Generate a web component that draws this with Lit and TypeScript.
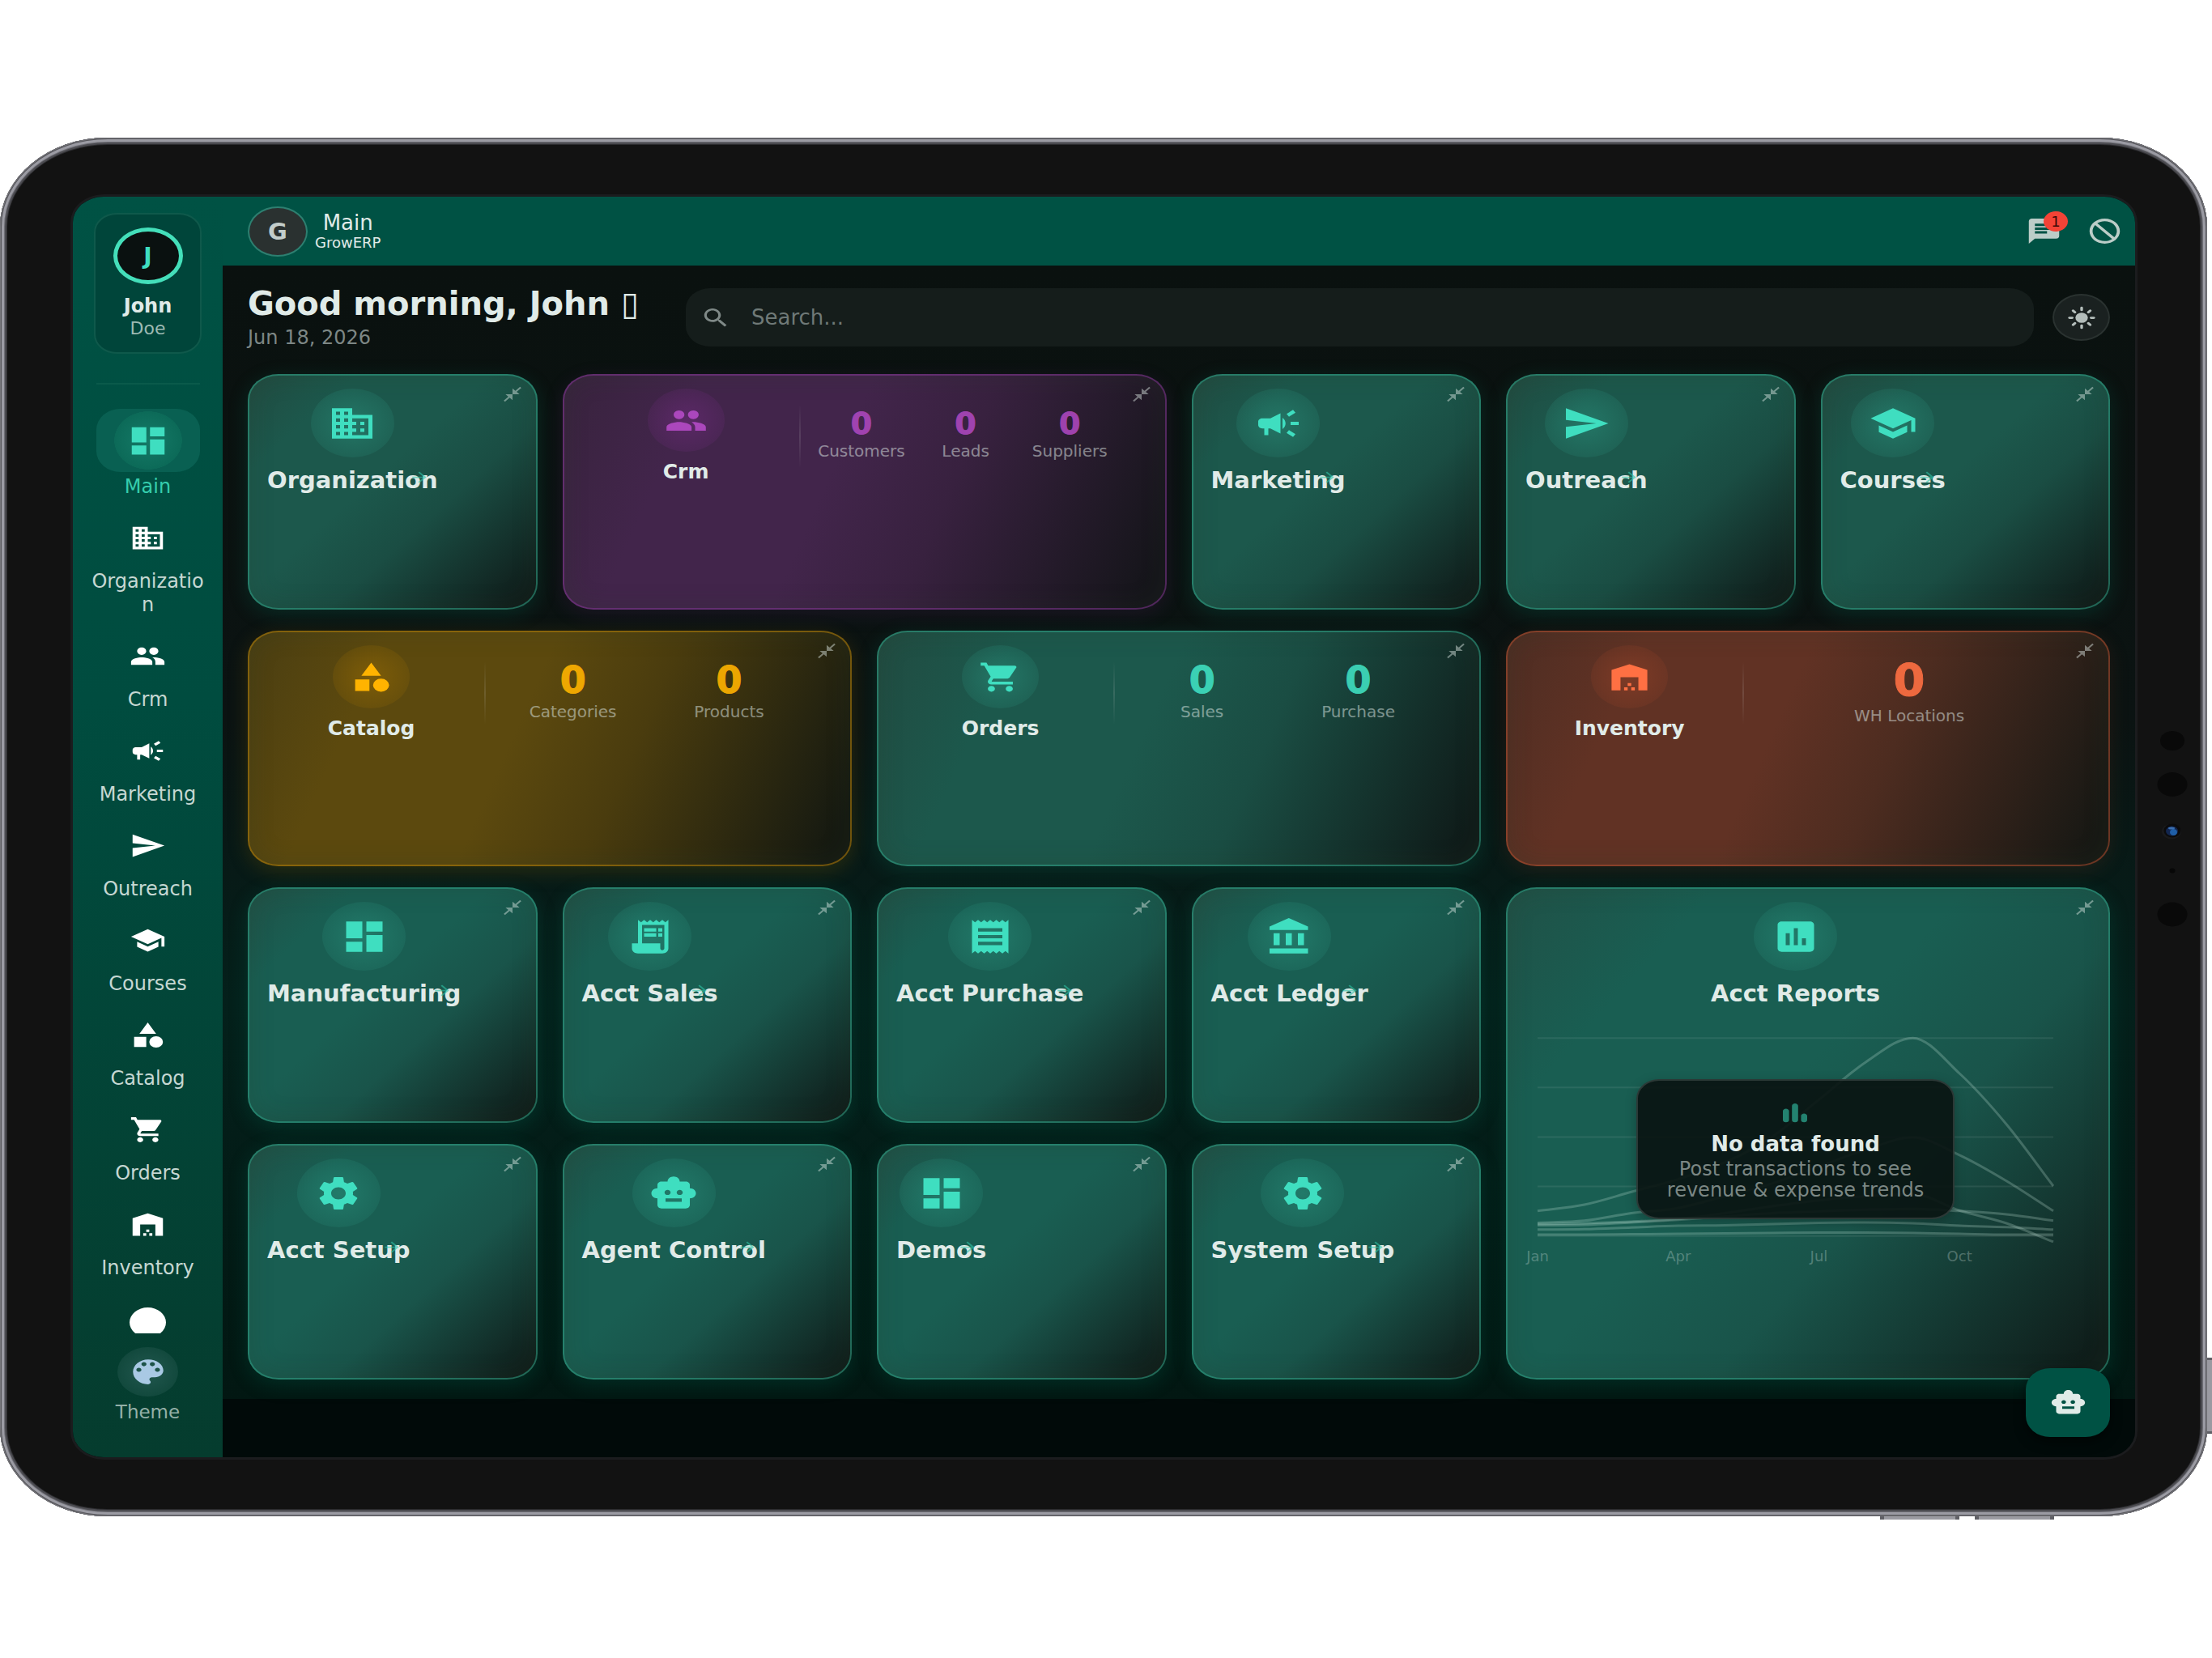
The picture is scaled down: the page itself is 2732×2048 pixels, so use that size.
import { LitElement, html, svg, css, nothing } from "lit";
import { customElement, property } from "lit/decorators.js";
import { classMap } from "lit/directives/class-map.js";

const ICONS: Record<string, string> = {
  dashboard: "M3 13h8V3H3v10zm0 8h8v-6H3v6zm10 0h8V11h-8v10zm0-18v6h8V3h-8z",
  business:
    "M12 7V3H2v18h20V7H12zM6 19H4v-2h2v2zm0-4H4v-2h2v2zm0-4H4V9h2v2zm0-4H4V5h2v2zm4 12H8v-2h2v2zm0-4H8v-2h2v2zm0-4H8V9h2v2zm0-4H8V5h2v2zm10 12h-8v-2h2v-2h-2v-2h2v-2h-2V9h8v10zm-2-8h-2v2h2v-2zm0 4h-2v2h2v-2z",
  people:
    "M16 11c1.66 0 2.99-1.34 2.99-3S17.66 5 16 5c-1.66 0-3 1.34-3 3s1.34 3 3 3zm-8 0c1.66 0 2.99-1.34 2.99-3S9.66 5 8 5C6.34 5 5 6.34 5 8s1.34 3 3 3zm0 2c-2.33 0-7 1.17-7 3.5V19h14v-2.5c0-2.33-4.67-3.5-7-3.5zm8 0c-.29 0-.62.02-.97.05 1.16.84 1.97 1.97 1.97 3.45V19h6v-2.5c0-2.33-4.67-3.5-7-3.5z",
  campaign:
    "M18 11v2h4v-2h-4zm-2 6.61c.96.71 2.21 1.65 3.2 2.39.4-.53.8-1.07 1.2-1.6-.99-.74-2.24-1.68-3.2-2.4-.4.54-.8 1.08-1.2 1.61zM20.4 5.6c-.4-.53-.8-1.07-1.2-1.6-.99.74-2.24 1.68-3.2 2.4.4.53.8 1.07 1.2 1.6.96-.72 2.21-1.65 3.2-2.4zM4 9c-1.1 0-2 .9-2 2v2c0 1.1.9 2 2 2h1v4h2v-4h1l5 3V6L8 9H4zm11.5 3c0-1.33-.58-2.53-1.5-3.35v6.69c.92-.81 1.5-2.01 1.5-3.34z",
  send: "M2.01 21 23 12 2.01 3 2 10l15 2-15 2z",
  school: "M5 13.18v4L12 21l7-3.82v-4L12 17l-7-3.82zM12 3 1 9l11 6 9-4.91V17h2V9L12 3z",
  category:
    "M12 2l-5.5 9h11zM3 13.5h8v8H3zM17.5 13a4.5 4.5 0 1 0 0 9 4.5 4.5 0 0 0 0-9z",
  cart:
    "M7 18c-1.1 0-1.99.9-1.99 2S5.9 22 7 22s2-.9 2-2-.9-2-2-2zM1 2v2h2l3.6 7.59-1.35 2.45c-.16.28-.25.61-.25.96 0 1.1.9 2 2 2h12v-2H7.42c-.14 0-.25-.11-.25-.25l.03-.12.9-1.63h7.45c.75 0 1.41-.41 1.75-1.03l3.58-6.49c.08-.14.12-.31.12-.48 0-.55-.45-1-1-1H5.21l-.94-2H1zm16 16c-1.1 0-1.99.9-1.99 2s.89 2 1.99 2 2-.9 2-2-.9-2-2-2z",
  warehouse:
    "M22 21V7L12 3 2 7v14h5v-9h10v9h5zm-11-2H9v2h2v-2zm2-3h-2v2h2v-2zm2 3h-2v2h2v-2z",
  receiptLong:
    "M19.5 3.5 18 2l-1.5 1.5L15 2l-1.5 1.5L12 2l-1.5 1.5L9 2 7.5 3.5 6 2v14H3v3c0 1.66 1.34 3 3 3h12c1.66 0 3-1.34 3-3V2l-1.5 1.5zM19 19c0 .55-.45 1-1 1s-1-.45-1-1v-3H8V5h11v14zM9 7h6v2H9zM16 7h2v2h-2zM9 10h6v2H9zM16 10h2v2h-2z",
  receipt:
    "M18 17H6v-2h12v2zm0-4H6v-2h12v2zm0-4H6V7h12v2zM3 22l1.5-1.5L6 22l1.5-1.5L9 22l1.5-1.5L12 22l1.5-1.5L15 22l1.5-1.5L18 22l1.5-1.5L21 22V2l-1.5 1.5L18 2l-1.5 1.5L15 2l-1.5 1.5L12 2l-1.5 1.5L9 2 7.5 3.5 6 2 4.5 3.5 3 2v20z",
  bank:
    "M4 10v7h3v-7H4zm6 0v7h3v-7h-3zM2 22h19v-3H2v3zm14-12v7h3v-7h-3zm-4.5-9L2 6v2h19V6l-9.5-5z",
  assessment:
    "M19 3H5c-1.1 0-2 .9-2 2v14c0 1.1.9 2 2 2h14c1.1 0 2-.9 2-2V5c0-1.1-.9-2-2-2zM9 17H7v-7h2v7zm4 0h-2V7h2v10zm4 0h-2v-4h2v4z",
  settings:
    "M19.14 12.94c.04-.3.06-.61.06-.94 0-.32-.02-.64-.07-.94l2.03-1.58c.18-.14.23-.41.12-.61l-1.92-3.32c-.12-.22-.37-.29-.59-.22l-2.39.96c-.5-.38-1.03-.7-1.62-.94l-.36-2.54c-.04-.24-.24-.41-.48-.41h-3.84c-.24 0-.43.17-.47.41l-.36 2.54c-.59.24-1.13.57-1.62.94l-2.39-.96c-.22-.08-.47 0-.59.22L2.74 8.87c-.12.21-.08.47.12.61l2.03 1.58c-.05.3-.09.63-.09.94s.02.64.07.94l-2.03 1.58c-.18.14-.23.41-.12.61l1.92 3.32c.12.22.37.29.59.22l2.39-.96c.5.38 1.03.7 1.62.94l.36 2.54c.05.24.24.41.48.41h3.84c.24 0 .44-.17.47-.41l.36-2.54c.59-.24 1.13-.56 1.62-.94l2.39.96c.22.08.47 0 .59-.22l1.92-3.32c.12-.22.07-.47-.12-.61l-2.01-1.58zM12 15.6c-1.98 0-3.6-1.62-3.6-3.6s1.62-3.6 3.6-3.6 3.6 1.62 3.6 3.6-1.62 3.6-3.6 3.6z",
  robot:
    "M20 9V7c0-1.1-.9-2-2-2h-3c0-1.66-1.34-3-3-3S9 3.34 9 5H6c-1.1 0-2 .9-2 2v2c-1.66 0-3 1.34-3 3s1.34 3 3 3v4c0 1.1.9 2 2 2h12c1.1 0 2-.9 2-2v-4c1.66 0 3-1.34 3-3s-1.34-3-3-3zM7.5 11.5c0-.83.67-1.5 1.5-1.5s1.5.67 1.5 1.5S9.83 13 9 13s-1.5-.67-1.5-1.5zM16 17H8v-2h8v2zm-1-4c-.83 0-1.5-.67-1.5-1.5S14.17 10 15 10s1.5.67 1.5 1.5S15.83 13 15 13z",
  palette:
    "M12 3c-4.97 0-9 4.03-9 9s4.03 9 9 9c.83 0 1.5-.67 1.5-1.5 0-.39-.15-.74-.39-1.01-.23-.26-.38-.61-.38-.99 0-.83.67-1.5 1.5-1.5H16c2.76 0 5-2.24 5-5 0-4.42-4.03-8-9-8zm-5.5 9c-.83 0-1.5-.67-1.5-1.5S5.67 9 6.5 9 8 9.67 8 10.5 7.33 12 6.5 12zm3-4C8.67 8 8 7.33 8 6.5S8.67 5 9.5 5s1.5.67 1.5 1.5S10.33 8 9.5 8zm5 0c-.83 0-1.5-.67-1.5-1.5S13.67 5 14.5 5s1.5.67 1.5 1.5S15.33 8 14.5 8zm3 4c-.83 0-1.5-.67-1.5-1.5S16.67 9 17.5 9s1.5.67 1.5 1.5-.67 1.5-1.5 1.5z",
  chat:
    "M20 2H4c-1.1 0-1.99.9-1.99 2L2 22l4-4h14c1.1 0 2-.9 2-2V4c0-1.1-.9-2-2-2zM6 9h12v2H6V9zm8 5H6v-2h8v2zm4-6H6V6h12v2z",
  block:
    "M12 2c5.52 0 10 4.48 10 10s-4.48 10-10 10S2 17.52 2 12 6.48 2 12 2zM20 12c0-4.42-3.58-8-8-8-1.85 0-3.55.63-4.9 1.69L18.31 16.9C19.37 15.55 20 13.85 20 12zm-8 8c1.85 0 3.55-.63 4.9-1.69L5.69 7.1C4.63 8.45 4 10.15 4 12c0 4.42 3.58 8 8 8z",
  search:
    "M15.5 14h-.79l-.28-.27C15.41 12.59 16 11.11 16 9.5 16 5.91 13.09 3 9.5 3S3 5.91 3 9.5 5.91 16 9.5 16c1.61 0 3.09-.59 4.23-1.57l.27.28v.79l5 4.99L20.49 19l-4.99-5zm-6 0C7.01 14 5 11.99 5 9.5S7.01 5 9.5 5 14 7.01 14 9.5 11.99 14 9.5 14z",
  collapse:
    "M22 3.41 16.71 8.7 20 12h-8V4l3.29 3.29L20.59 2 22 3.41zM3.41 22l5.29-5.29L12 20v-8H4l3.29 3.29L2 20.59 3.41 22z",
  arrow: "M12 4l-1.41 1.41L16.17 11H4v2h12.17l-5.58 5.59L12 20l8-8z",
  bars:
    "M6.4 9.2c1.05 0 1.9.85 1.9 1.9v6.8a1.9 1.9 0 0 1-3.8 0v-6.8c0-1.05.85-1.9 1.9-1.9zM12 5c1.05 0 1.9.85 1.9 1.9v11a1.9 1.9 0 0 1-3.8 0v-11c0-1.05.85-1.9 1.9-1.9zM17.6 13c1.05 0 1.9.85 1.9 1.9v3a1.9 1.9 0 0 1-3.8 0v-3c0-1.05.85-1.9 1.9-1.9z",
  dot: "M12 2.6a12 12 0 1 0 0 24 12 12 0 0 0 0-24z",
};

const RAYS = [0, 45, 90, 135, 180, 225, 270, 315];

@customElement("app-icon")
export class AppIcon extends LitElement {
  @property() name = "";

  static styles = css`
    :host {
      display: block;
      flex: none;
    }
    svg {
      display: block;
      width: 100%;
      height: 100%;
      overflow: visible;
      fill: currentColor;
    }
    .ray {
      stroke: currentColor;
      stroke-width: 2;
      stroke-linecap: round;
    }
  `;

  render() {
    const body =
      this.name === "sun"
        ? svg`<circle cx="12" cy="12" r="4.6"></circle>${RAYS.map(
            (a) => svg`<line class="ray" x1="12" y1="5" x2="12" y2="3" transform="rotate(${a} 12 12)"></line>`,
          )}`
        : svg`<path d=${ICONS[this.name] ?? ""}></path>`;
    return html`<svg viewBox="0 0 24 24" preserveAspectRatio="none" aria-hidden="true">${body}</svg>`;
  }
}

interface Stat {
  label: string;
  value: number;
}

interface Tile {
  title: string;
  icon: string;
  tone?: string;
  stats?: Stat[];
  chart?: boolean;
}

const NAV = [
  { label: "Main", icon: "dashboard" },
  { label: "Organization", icon: "business" },
  { label: "Crm", icon: "people" },
  { label: "Marketing", icon: "campaign" },
  { label: "Outreach", icon: "send" },
  { label: "Courses", icon: "school" },
  { label: "Catalog", icon: "category" },
  { label: "Orders", icon: "cart" },
  { label: "Inventory", icon: "warehouse" },
  { label: "", icon: "dot" },
];

const stat = (label: string): Stat => ({ label, value: 0 });

const TILES: Tile[] = [
  { title: "Organization", icon: "business" },
  { title: "Crm", icon: "people", tone: "purple", stats: [stat("Customers"), stat("Leads"), stat("Suppliers")] },
  { title: "Marketing", icon: "campaign" },
  { title: "Outreach", icon: "send" },
  { title: "Courses", icon: "school" },
  { title: "Catalog", icon: "category", tone: "amber", stats: [stat("Categories"), stat("Products")] },
  { title: "Orders", icon: "cart", stats: [stat("Sales"), stat("Purchase")] },
  { title: "Inventory", icon: "warehouse", tone: "orange", stats: [stat("WH Locations")] },
  { title: "Manufacturing", icon: "dashboard", tone: "deep" },
  { title: "Acct Sales", icon: "receiptLong", tone: "deep" },
  { title: "Acct Purchase", icon: "receipt", tone: "deep" },
  { title: "Acct Ledger", icon: "bank", tone: "deep" },
  { title: "Acct Reports", icon: "assessment", tone: "deep", chart: true },
  { title: "Acct Setup", icon: "settings", tone: "deep" },
  { title: "Agent Control", icon: "robot", tone: "deep" },
  { title: "Demos", icon: "dashboard", tone: "deep" },
  { title: "System Setup", icon: "settings", tone: "deep" },
];

const SERIES = [
  [415, 400, 370, 340, 300, 240, 152, 63, 6, 90, 210, 356],
  [443, 438, 420, 408, 380, 350, 310, 270, 241, 283, 344, 415],
  [446, 444, 440, 434, 420, 404, 390, 380, 375, 414, 444, 488],
  [449, 448, 442, 436, 428, 420, 416, 412, 410, 415, 423, 438],
  [459, 458, 454, 450, 449, 446, 443, 442, 444, 450, 453, 459],
  [471, 471, 470, 469, 468, 467, 466, 466, 467, 469, 471, 471],
];

/** Smooth path through monthly values on a 1120-unit wide axis. */
function curve(values: number[]): string {
  const step = 1120 / (values.length - 1);
  const at = (i: number) => values[Math.max(0, Math.min(values.length - 1, i))];
  // Peaks and steps are flattened by damping the slope at each point.
  const slope = (i: number) => {
    if (i === 0 || i === values.length - 1) return 0;
    const a = at(i) - at(i - 1);
    const b = at(i + 1) - at(i);
    return a * b <= 0 ? 0 : (a + b) / 2;
  };
  let d = `M0 ${values[0]}`;
  for (let i = 0; i < values.length - 1; i++) {
    const first = i === 0 ? at(1) - at(0) : slope(i);
    const last = i === values.length - 2 ? at(i + 1) - at(i) : slope(i + 1);
    d += `C${(i + 1 / 3) * step} ${at(i) + first / 3} ${(i + 2 / 3) * step} ${at(i + 1) - last / 3} ${(i + 1) * step} ${at(i + 1)}`;
  }
  return d;
}

@customElement("trend-chart")
export class TrendChart extends LitElement {
  static styles = css`
    :host {
      display: block;
      position: relative;
    }
    .plot {
      display: block;
      width: 100%;
      height: 256px;
      overflow: visible;
    }
    .rule,
    .line {
      fill: none;
      vector-effect: non-scaling-stroke;
    }
    .rule {
      stroke: rgba(255, 255, 255, 0.08);
      stroke-width: 2;
    }
    .line {
      stroke: rgba(200, 230, 220, 0.25);
      stroke-width: 3;
    }
    .months {
      display: grid;
      grid-template-columns: repeat(11, 1fr);
      margin-top: 5px;
      font-size: 18px;
      line-height: 24px;
      color: rgba(224, 235, 232, 0.3);
    }
    .month {
      display: flex;
      justify-content: center;
      width: 0;
      grid-row: 1;
    }
    .m0 { grid-column: 1; }
    .m1 { grid-column: 4; }
    .m2 { grid-column: 7; }
    .m3 { grid-column: 10; }
    .overlay {
      position: absolute;
      inset: 0 0 5px;
      display: flex;
      align-items: center;
      justify-content: center;
    }
    .empty {
      display: flex;
      flex-direction: column;
      align-items: center;
      padding: 20px 36px 21px;
      border: 2px solid rgba(120, 130, 128, 0.3);
      border-radius: 28px / 24px;
      background: rgba(10, 20, 18, 0.93);
      box-shadow: 0 4px 14px rgba(0, 0, 0, 0.25);
      text-align: center;
      white-space: nowrap;
    }
    .bars {
      width: 48px;
      height: 38px;
      margin-bottom: 5px;
      color: #238270;
    }
    .head {
      margin: 0;
      font-size: 26px;
      font-weight: 700;
      line-height: 31px;
      color: #e0ebe8;
    }
    .text {
      margin: 2px 0 0;
      font-size: 24px;
      line-height: 26px;
      color: #7b8784;
    }
  `;

  render() {
    return html`
      <svg class="plot" viewBox="0 0 1120 490" preserveAspectRatio="none" role="img" aria-label="Monthly trends">
        ${[6, 123, 240, 357, 474].map((y) => svg`<path class="rule" d="M0 ${y}H1120"></path>`)}
        ${SERIES.map((s) => svg`<path class="line" d=${curve(s)}></path>`)}
      </svg>
      <div class="months">
        ${["Jan", "Apr", "Jul", "Oct"].map((m, i) => html`<span class="month m${i}">${m}</span>`)}
      </div>
      <div class="overlay">
        <div class="empty">
          <app-icon class="bars" name="bars"></app-icon>
          <p class="head">No data found</p>
          <p class="text">Post transactions to see<br />revenue &amp; expense trends</p>
        </div>
      </div>
    `;
  }
}

@customElement("dash-tile")
export class DashTile extends LitElement {
  @property({ attribute: false }) tile!: Tile;

  static styles = css`
    :host {
      display: block;
      min-width: 0;
    }
    .card {
      --accent: #3fdec0;
      --edge: rgba(45, 150, 125, 0.62);
      --c0: #214b41;
      --c1: #1c584c;
      --c2: #1a4d43;
      --c3: #0f1b19;
      --halo: rgba(46, 160, 138, 0.42);
      --glow: rgba(0, 120, 95, 0.24);
      position: relative;
      box-sizing: border-box;
      height: 100%;
      padding: 16px 53px 20px 22px;
      border: 2px solid var(--edge);
      border-radius: 38px / 32px;
      background: linear-gradient(var(--tilt, 138deg), var(--c0), var(--c1) 20%, var(--c1) 44%, var(--c2) 62%, var(--c3) 96%);
      background-origin: border-box;
      box-shadow: 0 6px 24px var(--glow), inset 0 0 30px rgba(40, 60, 40, 0.22);
      color: #e0ebe8;
    }
    .deep {
      --c0: #205147;
      --c1: #195e52;
      --c2: #19544a;
      --c3: #0f1d1a;
    }
    .wide { --tilt: 114deg; }
    .chart { --tilt: 132deg; }
    .purple {
      --accent: #ab47bc;
      --edge: rgba(130, 55, 145, 0.55);
      --c0: #38233d;
      --c1: #42254b;
      --c2: #38213f;
      --c3: #15151a;
      --halo: rgba(125, 45, 140, 0.42);
      --glow: rgba(110, 40, 130, 0.16);
    }
    .amber {
      --accent: #ffb300;
      --edge: rgba(160, 115, 10, 0.65);
      --c0: #4a3e12;
      --c1: #5c490e;
      --c2: #4a3c0e;
      --c3: #151911;
      --halo: rgba(165, 115, 0, 0.45);
      --glow: rgba(120, 90, 0, 0.3);
    }
    .orange {
      --accent: #ff7043;
      --edge: rgba(165, 75, 45, 0.6);
      --c0: #4d2d23;
      --c1: #613224;
      --c2: #4d2c20;
      --c3: #171814;
      --halo: rgba(165, 70, 40, 0.42);
      --glow: rgba(120, 55, 30, 0.2);
    }
    .collapse {
      position: absolute;
      top: 10px;
      right: 14px;
      padding: 2px;
      border: 0;
      background: none;
      color: rgba(224, 235, 232, 0.46);
    }
    .collapse app-icon {
      width: 26px;
      height: 22px;
    }
    .stack {
      display: flex;
      flex-direction: column;
      align-items: center;
      width: fit-content;
    }
    .chart .stack { width: auto; }
    .halo {
      display: flex;
      align-items: center;
      justify-content: center;
      width: 103px;
      height: 85px;
      border-radius: 50%;
      background: radial-gradient(closest-side, var(--halo), color-mix(in srgb, var(--halo) 36%, transparent));
      color: var(--accent);
    }
    .halo app-icon {
      width: 60px;
      height: 50px;
    }
    .title {
      position: relative;
      margin: 12px 0 0;
      font-size: 29px;
      font-weight: 700;
      line-height: 32px;
      white-space: nowrap;
    }
    .title a {
      color: inherit;
      text-decoration: none;
    }
    .arrow {
      position: absolute;
      right: 10px;
      top: 2px;
      width: 26px;
      height: 21px;
      color: #2fc4a6;
      opacity: 0.6;
    }
    .row {
      display: grid;
      grid-template-columns: 2fr 24px 3fr;
      align-items: center;
    }
    .row .stack { justify-self: center; }
    .row .halo {
      width: 95px;
      height: 78px;
    }
    .row .halo app-icon {
      width: 53px;
      height: 43px;
    }
    .row .title {
      font-size: 25px;
      line-height: 28px;
      margin-top: 11px;
    }
    .sep {
      justify-self: center;
      width: 2px;
      height: 78px;
      background: linear-gradient(transparent, rgba(200, 200, 200, 0.16), transparent);
    }
    .stats {
      display: grid;
      grid-auto-flow: column;
      grid-auto-columns: 1fr;
      margin: 0;
      padding-bottom: 5px;
    }
    .stat {
      display: flex;
      flex-direction: column-reverse;
      align-items: center;
      gap: 2px;
    }
    .value {
      margin: 0;
      font-weight: 700;
      font-size: 46px;
      line-height: 50px;
      color: var(--accent);
      -webkit-text-stroke: 1px var(--accent);
      opacity: 0.9;
    }
    .n3 .value {
      font-size: 38px;
      line-height: 40px;
    }
    .n1 .value {
      font-size: 56px;
      line-height: 60px;
    }
    .name {
      font-size: 20px;
      line-height: 24px;
      color: #e0ebe8;
      opacity: 0.5;
    }
    trend-chart {
      margin: 36px 15px 0;
    }
  `;

  render() {
    const t = this.tile;
    const head = html`
      <div class="stack">
        <span class="halo"><app-icon name=${t.icon}></app-icon></span>
        <h2 class="title">
          <a href="#">${t.title}</a>
          ${t.stats || t.chart ? nothing : html`<app-icon class="arrow" name="arrow"></app-icon>`}
        </h2>
      </div>
    `;
    const classes = { card: true, wide: !!t.stats, chart: !!t.chart, [t.tone ?? "teal"]: true };
    return html`
      <article class=${classMap(classes)}>
        ${t.stats
          ? html`<div class="row">
              ${head}
              <span class="sep"></span>
              <dl class="stats n${t.stats.length}">
                ${t.stats.map(
                  (s) => html`<div class="stat">
                    <dt class="name">${s.label}</dt>
                    <dd class="value">${s.value}</dd>
                  </div>`,
                )}
              </dl>
            </div>`
          : head}
        ${t.chart ? html`<trend-chart></trend-chart>` : nothing}
        <button class="collapse" type="button" aria-label="Collapse ${t.title}">
          <app-icon name="collapse"></app-icon>
        </button>
      </article>
    `;
  }
}

@customElement("app-root")
export class AppRoot extends LitElement {
  static styles = css`
    :host {
      display: block;
      box-sizing: border-box;
      min-height: 100vh;
      padding: 170px 6px 175px 0;
      background: #fff;
      font-family: "DejaVu Sans", Verdana, sans-serif;
      color: #e0ebe8;
    }
    .device {
      position: relative;
      padding: 73px 89px 73px 90px;
      border-radius: 133px / 110px;
      background: #121212;
      box-shadow: inset 0 0 0 1px #77777c, inset 0 0 0 2px #55555a, inset 0 0 0 5px #9b9ba3,
        inset 0 0 0 6px #6f6f76, inset 0 0 0 8px #4b4b50, inset 0 0 0 9px #2c2c2f;
    }
    .key {
      position: absolute;
      background: #9a9aa1;
      border: 0 solid #5f5f65;
    }
    .key-side {
      left: 100%;
      top: 1507px;
      width: 6px;
      height: 88px;
      border-width: 3px 0;
    }
    .key-up,
    .key-down {
      top: 100%;
      width: 88px;
      height: 4px;
      border-width: 0 5px;
    }
    .key-up { right: 306px; }
    .key-down { right: 189px; }
    .sensors {
      position: absolute;
      right: 24px;
      top: 733px;
      width: 38px;
      height: 242px;
    }
    .screen {
      position: relative;
      display: grid;
      grid-template-columns: 185px minmax(0, 1fr);
      overflow: hidden;
      border-radius: 38px / 32px;
      background: #010a09;
    }
    .rim {
      border-radius: 38px / 32px;
      box-shadow: 0 0 0 3px #1b1c1e;
    }
    .side {
      display: flex;
      flex-direction: column;
      align-items: center;
      padding: 20px 0 41px;
      background: linear-gradient(#005244, #004c3f 40%, #053c2e);
    }
    .profile {
      display: flex;
      flex-direction: column;
      align-items: center;
      box-sizing: border-box;
      width: 133px;
      padding: 16px 0;
      border: 2px solid rgba(30, 110, 92, 0.5);
      border-radius: 28px / 24px;
      background: #00453a;
    }
    .avatar {
      display: flex;
      align-items: center;
      justify-content: center;
      box-sizing: border-box;
      width: 86px;
      height: 70px;
      margin-bottom: 14px;
      border: 5px solid #44dfba;
      border-radius: 50%;
      background: #0a1110;
      font-size: 28px;
      font-weight: 700;
      color: #3fdec0;
    }
    .first,
    .last {
      font-size: 24px;
      line-height: 27px;
    }
    .first { font-weight: 700; }
    .last {
      font-size: 22px;
      color: #9dbab3;
    }
    .line {
      width: 128px;
      height: 2px;
      margin: 36px 0 30px;
      border: 0;
      background: rgba(40, 120, 100, 0.25);
    }
    .nav {
      display: flex;
      flex: 1 1 0;
      flex-direction: column;
      gap: 12px;
      width: 100%;
      height: 0;
      min-height: 0;
      overflow: hidden;
    }
    .item {
      display: flex;
      flex: none;
      flex-direction: column;
      align-items: center;
      gap: 4px;
      color: #fff;
      text-decoration: none;
    }
    .pic {
      display: flex;
      align-items: center;
      justify-content: center;
      width: 128px;
      height: 72px;
    }
    .pic app-icon {
      width: 45px;
      height: 37px;
    }
    .caption {
      width: 149px;
      font-size: 24px;
      line-height: 29px;
      text-align: center;
      word-break: break-all;
      color: #c6d8d3;
    }
    .active .pic {
      height: 78px;
      border-radius: 30px / 26px;
      background: radial-gradient(ellipse 42px 36px at center, #157a67, #0c6a58 99%, #096052);
    }
    .active .pic app-icon {
      width: 54px;
      height: 45px;
    }
    .active app-icon { color: #3fdec0; }
    .active .caption { color: #35cdae; }
    .theme {
      display: flex;
      flex-direction: column;
      align-items: center;
      gap: 5px;
      margin-top: 17px;
      padding: 0;
      border: 0;
      background: none;
      font: inherit;
      font-size: 23px;
      line-height: 29px;
      color: #94b0a8;
    }
    .disc {
      display: flex;
      align-items: center;
      justify-content: center;
      width: 75px;
      height: 61px;
      border-radius: 50%;
      background: radial-gradient(closest-side, #22584f, #12493d);
      color: #a9c9e4;
    }
    .disc app-icon {
      width: 50px;
      height: 41px;
    }
    .main {
      display: flex;
      flex-direction: column;
      min-width: 0;
    }
    .bar {
      display: flex;
      align-items: center;
      gap: 30px;
      height: 85px;
      padding: 0 15px 0 31px;
      background: #005244;
    }
    .brand {
      display: flex;
      flex: 1;
      align-items: center;
      gap: 9px;
    }
    .logo {
      display: flex;
      align-items: center;
      justify-content: center;
      box-sizing: border-box;
      width: 74px;
      height: 62px;
      border: 2px solid #2d7f70;
      border-radius: 50%;
      background: #2a3130;
      font-size: 29px;
      font-weight: 700;
      color: #c3cdca;
    }
    .names { text-align: center; }
    .page {
      margin: 0;
      font-size: 26px;
      font-weight: 400;
      line-height: 28px;
    }
    .org {
      margin: 0;
      font-size: 18px;
      line-height: 22px;
    }
    .tool {
      position: relative;
      padding: 0;
      border: 0;
      background: none;
      font: inherit;
      color: #bccdc8;
    }
    .tool app-icon {
      width: 45px;
      height: 37px;
    }
    .badge {
      position: absolute;
      left: 22px;
      top: -6px;
      width: 30px;
      height: 25px;
      border-radius: 50%;
      background: #f44336;
      font-size: 18px;
      line-height: 25px;
      text-align: center;
      color: #3a0a08;
    }
    .content {
      padding: 25px 31px 24px;
      background: linear-gradient(#0a110f, #0b1312 40%, #04201b 65%, #021712);
    }
    .intro {
      display: flex;
      align-items: center;
      gap: 23px;
      margin-bottom: 31px;
    }
    .greet { flex: 0 0 518px; }
    .hello {
      margin: 0;
      font-size: 40px;
      font-weight: 700;
      line-height: 44px;
      white-space: nowrap;
    }
    .date {
      margin: 6px 0 0;
      font-size: 24px;
      line-height: 28px;
      color: #7d8785;
    }
    .find {
      display: flex;
      flex: 1;
      align-items: center;
      gap: 25px;
      box-sizing: border-box;
      height: 72px;
      padding: 0 30px 0 18px;
      border-radius: 30px / 25px;
      background: #151d1b;
      color: #7f8987;
    }
    .find app-icon {
      width: 38px;
      height: 31px;
    }
    .field {
      flex: 1;
      min-width: 0;
      padding: 0;
      border: 0;
      outline: 0;
      background: none;
      font: inherit;
      font-size: 26px;
      color: #e0ebe8;
    }
    .field::placeholder {
      color: #6f7977;
      opacity: 1;
    }
    .mode {
      display: flex;
      align-items: center;
      justify-content: center;
      width: 71px;
      height: 58px;
      padding: 0;
      border: 2px solid #2a3230;
      border-radius: 50%;
      background: #1a2120;
      color: #b4bebb;
    }
    .mode app-icon {
      width: 40px;
      height: 33px;
    }
    .tiles {
      display: grid;
      grid-template-columns: repeat(6, minmax(0, 1fr));
      grid-auto-rows: 291px;
      gap: 26px 31px;
    }
    .span2 { grid-column: span 2; }
    .tall {
      grid-column: span 2;
      grid-row: span 2;
    }
    .foot { height: 72px; }
    .fab {
      position: absolute;
      right: 31px;
      bottom: 25px;
      display: flex;
      align-items: center;
      justify-content: center;
      width: 104px;
      height: 85px;
      padding: 0;
      border: 0;
      border-radius: 30px / 26px;
      background: #005244;
      box-shadow: 0 6px 14px rgba(0, 0, 0, 0.5);
      color: #e0ebe8;
    }
    .fab app-icon {
      width: 45px;
      height: 37px;
    }
  `;

  render() {
    return html`
      <div class="device">
        <span class="key key-side"></span>
        <span class="key key-up"></span>
        <span class="key key-down"></span>
        <svg class="sensors" viewBox="0 0 38 242" aria-hidden="true">
          <ellipse cx="19" cy="12" rx="15" ry="12" fill="#090909"></ellipse>
          <ellipse cx="19" cy="66" rx="18.5" ry="15" fill="#090909"></ellipse>
          <ellipse cx="18" cy="124" rx="12" ry="9.5" fill="#1a1a1b"></ellipse>
          <ellipse cx="19" cy="123" rx="10.5" ry="8.5" fill="#0b0b0c"></ellipse>
          <ellipse cx="18.5" cy="123.5" rx="7.5" ry="6" fill="#12264f"></ellipse>
          <ellipse cx="20.5" cy="125" rx="4.5" ry="4" fill="#1f5fa8"></ellipse>
          <ellipse cx="18" cy="120" rx="4" ry="1.5" fill="#3b6fb0"></ellipse>
          <ellipse cx="19" cy="172.5" rx="3.5" ry="3" fill="#070707"></ellipse>
          <ellipse cx="19" cy="226.5" rx="18.5" ry="15" fill="#090909"></ellipse>
        </svg>
        <div class="rim">
          <div class="screen">
            <aside class="side">
              <div class="profile">
                <span class="avatar">J</span>
                <span class="first">John</span>
                <span class="last">Doe</span>
              </div>
              <hr class="line" />
              <nav class="nav">
                ${NAV.map(
                  (n, i) => html`<a class=${classMap({ item: true, active: i === 0 })} href="#" aria-label=${n.label || "More"}>
                    <span class="pic"><app-icon name=${n.icon}></app-icon></span>
                    <span class="caption">${n.label}</span>
                  </a>`,
                )}
              </nav>
              <button class="theme" type="button">
                <span class="disc"><app-icon name="palette"></app-icon></span>
                <span>Theme</span>
              </button>
            </aside>
            <main class="main">
              <header class="bar">
                <div class="brand">
                  <span class="logo">G</span>
                  <div class="names">
                    <h1 class="page">Main</h1>
                    <p class="org">GrowERP</p>
                  </div>
                </div>
                <button class="tool" type="button" aria-label="Messages">
                  <app-icon name="chat"></app-icon>
                  <span class="badge">1</span>
                </button>
                <button class="tool" type="button" aria-label="Do not disturb">
                  <app-icon name="block"></app-icon>
                </button>
              </header>
              <section class="content">
                <div class="intro">
                  <div class="greet">
                    <p class="hello">Good morning, John ▯</p>
                    <p class="date">Jun 18, 2026</p>
                  </div>
                  <label class="find">
                    <app-icon name="search"></app-icon>
                    <input class="field" type="search" placeholder="Search..." aria-label="Search" />
                  </label>
                  <button class="mode" type="button" aria-label="Light mode">
                    <app-icon name="sun"></app-icon>
                  </button>
                </div>
                <div class="tiles">
                  ${TILES.map(
                    (t) => html`<dash-tile
                      class=${classMap({ span2: !!t.stats, tall: !!t.chart })}
                      .tile=${t}
                    ></dash-tile>`,
                  )}
                </div>
              </section>
              <div class="foot"></div>
            </main>
            <button class="fab" type="button" aria-label="Assistant">
              <app-icon name="robot"></app-icon>
            </button>
          </div>
        </div>
      </div>
    `;
  }
}
